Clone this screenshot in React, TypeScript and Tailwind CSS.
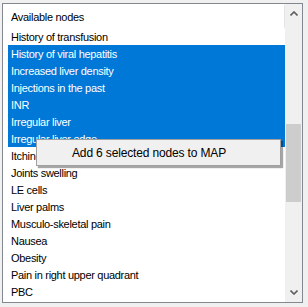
import React from "react";

const rows: { t: string; sel: boolean }[] = [
  { t: "History of transfusion", sel: false },
  { t: "History of viral hepatitis", sel: true },
  { t: "Increased liver density", sel: true },
  { t: "Injections in the past", sel: true },
  { t: "INR", sel: true },
  { t: "Irregular liver", sel: true },
  { t: "Irregular liver edge", sel: true },
  { t: "Itching", sel: false },
  { t: "Joints swelling", sel: false },
  { t: "LE cells", sel: false },
  { t: "Liver palms", sel: false },
  { t: "Musculo-skeletal pain", sel: false },
  { t: "Nausea", sel: false },
  { t: "Obesity", sel: false },
  { t: "Pain in right upper quadrant", sel: false },
  { t: "PBC", sel: false },
];

function Chevron({ up }: { up: boolean }) {
  return (
    <svg width="8" height="5" viewBox="0 0 8 5">
      {up ? (
        <polyline points="0.5,4.5 4,1 7.5,4.5" fill="none" stroke="#606060" strokeWidth="1.6" />
      ) : (
        <polyline points="0.5,0.5 4,4 7.5,0.5" fill="none" stroke="#606060" strokeWidth="1.6" />
      )}
    </svg>
  );
}

export default function App() {
  return (
    <div
      className="relative w-[308px] h-[307px] bg-[#f0f0f0] pt-[3px] pl-[2px] overflow-hidden"
      style={{ fontFamily: '"Liberation Sans", Arial, sans-serif' }}
    >
      <div className="w-[301px] h-[300px] border border-[#828790] bg-white flex">
        <div className="w-[282px] h-full flex flex-col overflow-hidden relative">
          <div className="h-[24px] flex items-center pl-[8px] pt-[2px] text-[11px] tracking-[-0.3px] text-black shrink-0 relative">
            Available nodes
            <div className="absolute right-0 top-[1px] w-px h-[23px] bg-[#e5e5e5]" />
          </div>
          <div className="flex flex-col ml-[5px]">
            {rows.map((r) => (
              <div
                key={r.t}
                className={
                  "h-[17px] flex items-center pl-[3px] pt-[1px] text-[11px] tracking-[-0.3px] shrink-0 whitespace-nowrap " +
                  (r.sel ? "bg-[#0078d7] text-white" : "text-black")
                }
              >
                {r.t}
              </div>
            ))}
          </div>
        </div>
        <div className="w-[17px] h-full bg-[#f0f0f0] flex flex-col">
          <div className="h-[17px] flex items-center justify-center shrink-0 pt-[2px]">
            <Chevron up />
          </div>
          <div className="h-[103px] shrink-0" />
          <div className="h-[78px] mx-[1px] bg-[#cdcdcd] shrink-0" />
          <div className="flex-1" />
          <div className="h-[17px] flex items-center justify-center shrink-0 pb-[2px]">
            <Chevron up={false} />
          </div>
        </div>
      </div>
      <div className="absolute left-[36px] top-[139px] w-[245px] h-[27px] bg-[#f0f0f0] border border-[#a0a0a0] shadow-[2px_2px_1px_rgba(0,0,0,0.35)] flex items-center pl-[35px] text-[12px] tracking-[-0.15px] text-black whitespace-nowrap">
        Add 6 selected nodes to MAP
      </div>
    </div>
  );
}
